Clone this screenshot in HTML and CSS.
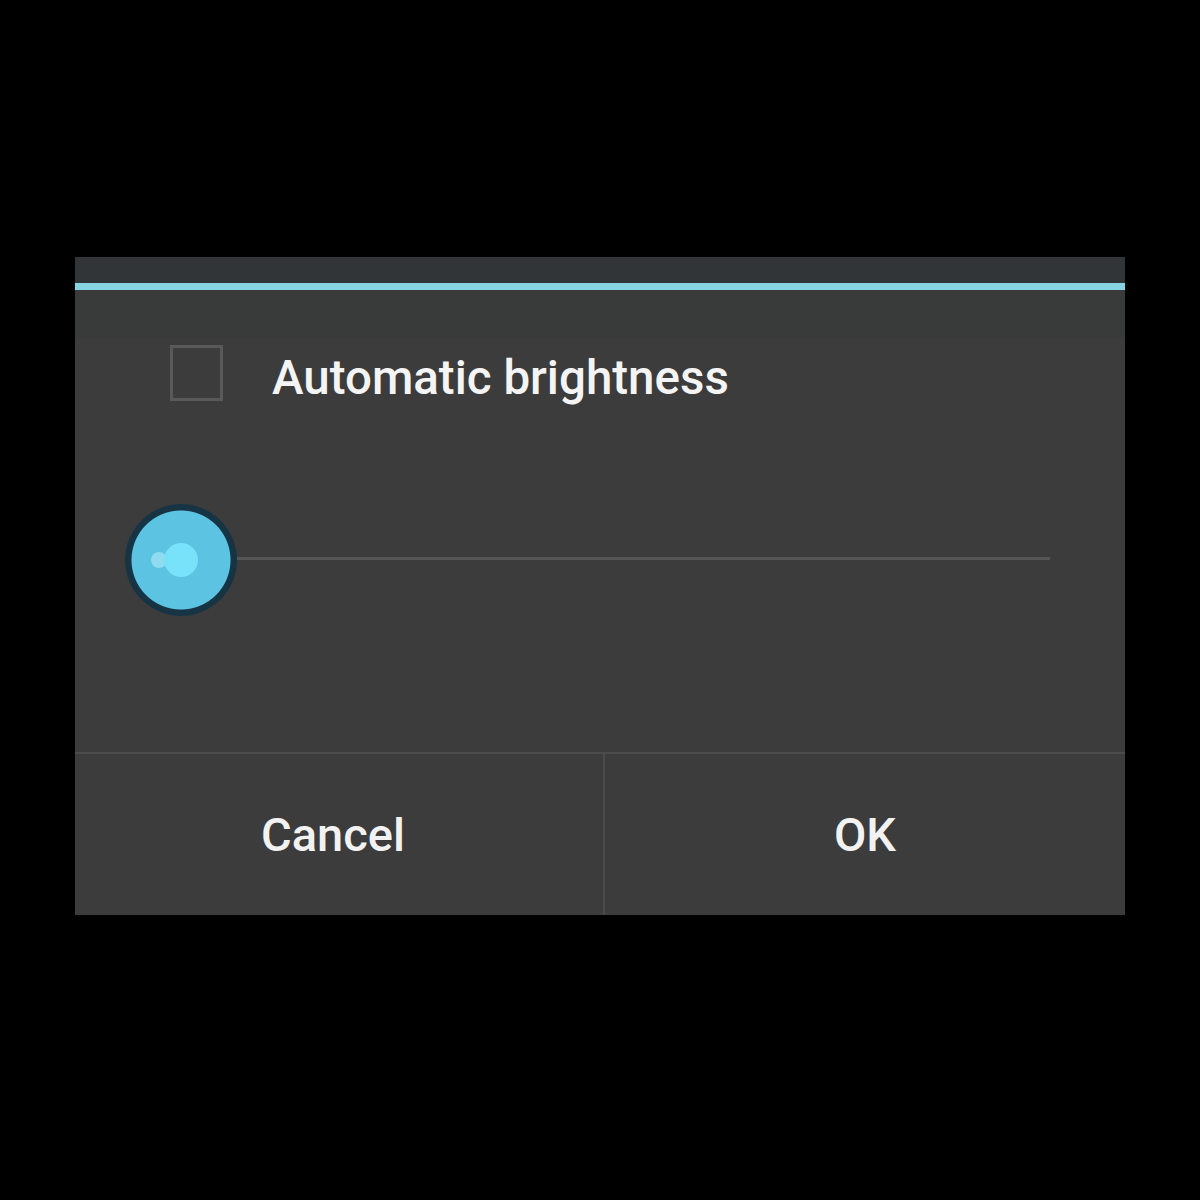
FILE: index.html
```html
<!DOCTYPE html>
<html>
<head>
<meta charset="utf-8">
<link rel="stylesheet" href="styles.css">
</head>
<body>
<div class="dialog">
  <div class="title"></div>
  <div class="accent"></div>
  <div class="gap"></div>
  <div class="content">
    <div class="row">
      <div class="checkbox"></div>
      <span class="label">Automatic brightness</span>
    </div>
    <div class="slider">
      <div class="thumb"><div class="core"></div></div>
      <div class="track"></div>
    </div>
  </div>
  <div class="buttons">
    <div class="btn left">Cancel</div>
    <div class="btn right">OK</div>
  </div>
</div>
</body>
</html>
```
FILE: styles.css
```css
html, body {
  margin: 0;
  padding: 0;
  background: #000;
  width: 1200px;
  height: 1200px;
  font-family: Roboto, "Liberation Sans", sans-serif;
}
.dialog {
  margin: 257px 0 0 75px;
  width: 1050px;
  height: 658px;
  background: #3c3c3c;
  display: flex;
  flex-direction: column;
}
.title {
  height: 26px;
  background: #323538;
}
.accent {
  height: 7px;
  background: #86d3e2;
  box-shadow: 0 1px 2px #1a3a48;
}
.gap {
  height: 48px;
  background: #393a3a;
}
.content {
  flex: 1;
  display: flex;
  flex-direction: column;
}
.row {
  display: flex;
  align-items: center;
  height: 80px;
}
.checkbox {
  width: 47px;
  height: 50px;
  border: 3px solid #595959;
  margin-left: 95px;
  margin-bottom: 10px;
  box-sizing: content-box;
}
.label {
  margin-left: 49px;
  color: #f4f4f4;
  font-size: 47.5px;
  font-weight: 500;
}
.slider {
  display: flex;
  align-items: center;
  margin-top: 86px;
  height: 112px;
}
.thumb {
  width: 112px;
  height: 112px;
  border-radius: 50%;
  background: radial-gradient(circle, #5cc3e3 0 49px, #173444 50px 56px);
  margin-left: 50px;
  flex: none;
  display: flex;
  align-items: center;
  justify-content: center;
}
.core {
  width: 34px;
  height: 34px;
  border-radius: 50%;
  background: #78e2fb;
  box-shadow: -22px 0 0 -9px #8fdcf0;
}
.track {
  height: 3px;
  background: #555;
  width: 813px;
  margin-top: -4px;
}
.buttons {
  height: 161px;
  border-top: 2px solid #4b4b4b;
  display: flex;
}
.btn {
  display: flex;
  align-items: center;
  justify-content: center;
  color: #f2f2f2;
  font-size: 47px;
  font-weight: 500;
}
.btn.left {
  flex: none;
  width: 516px;
  padding-right: 12px;
}
.btn.right {
  flex: 1;
  border-left: 2px solid #4b4b4b;
}
```
